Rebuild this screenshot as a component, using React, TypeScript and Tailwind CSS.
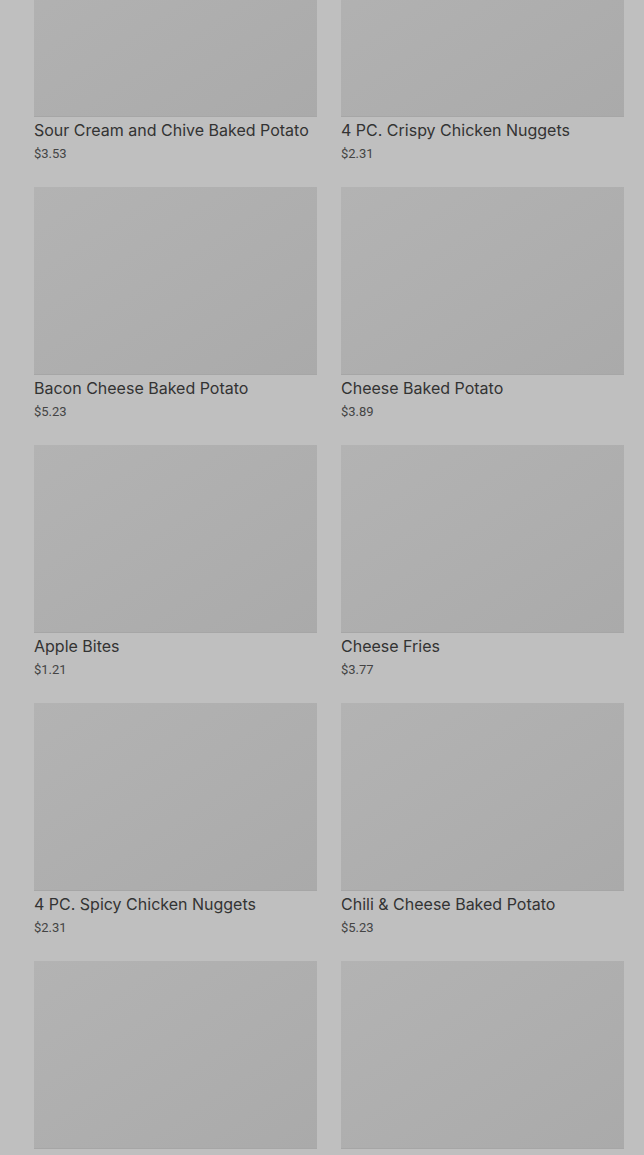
const ITEMS = [
	{ name: 'Sour Cream and Chive Baked Potato', price: '$3.53' },
	{ name: '4 PC. Crispy Chicken Nuggets', price: '$2.31' },
	{ name: 'Bacon Cheese Baked Potato', price: '$5.23' },
	{ name: 'Cheese Baked Potato', price: '$3.89' },
	{ name: 'Apple Bites', price: '$1.21' },
	{ name: 'Cheese Fries', price: '$3.77' },
	{ name: '4 PC. Spicy Chicken Nuggets', price: '$2.31' },
	{ name: 'Chili & Cheese Baked Potato', price: '$5.23' },
	{ name: 'Frosty Cream Cone', price: '$1.49' },
	{ name: 'Large French Fries', price: '$2.89' }
]

function MenuCard({ name, price }: { name: string; price: string }) {
	return (
		<div className="flex flex-col">
			{/* Image placeholder */}
			<div className="h-[188px] bg-gradient-to-br from-[#b3b3b3] to-[#aaaaaa] border-b border-[#a6a6a6]" />
			<div className="mt-[2px] text-[16px] leading-[22px] text-[#333333] whitespace-nowrap" style={{ fontFamily: 'Inter, Roboto, sans-serif' }}>
				{name}
			</div>
			<div className="mt-[4px] text-[13px] leading-[18px] text-[#444444]">{price}</div>
		</div>
	)
}

export default function App() {
	return (
		<div
			className="w-[644px] h-[1155px] overflow-hidden bg-[#bfbfbf]"
			style={{ fontFamily: 'Roboto, "Noto Sans", sans-serif' }}
		>
			<div className="-mt-[71px] pl-[34px] pr-[20px] grid grid-cols-2 gap-x-[24px] gap-y-[24px]">
				{ITEMS.map((item, idx) => (
					<MenuCard key={idx} name={item.name} price={item.price} />
				))}
			</div>
		</div>
	)
}
